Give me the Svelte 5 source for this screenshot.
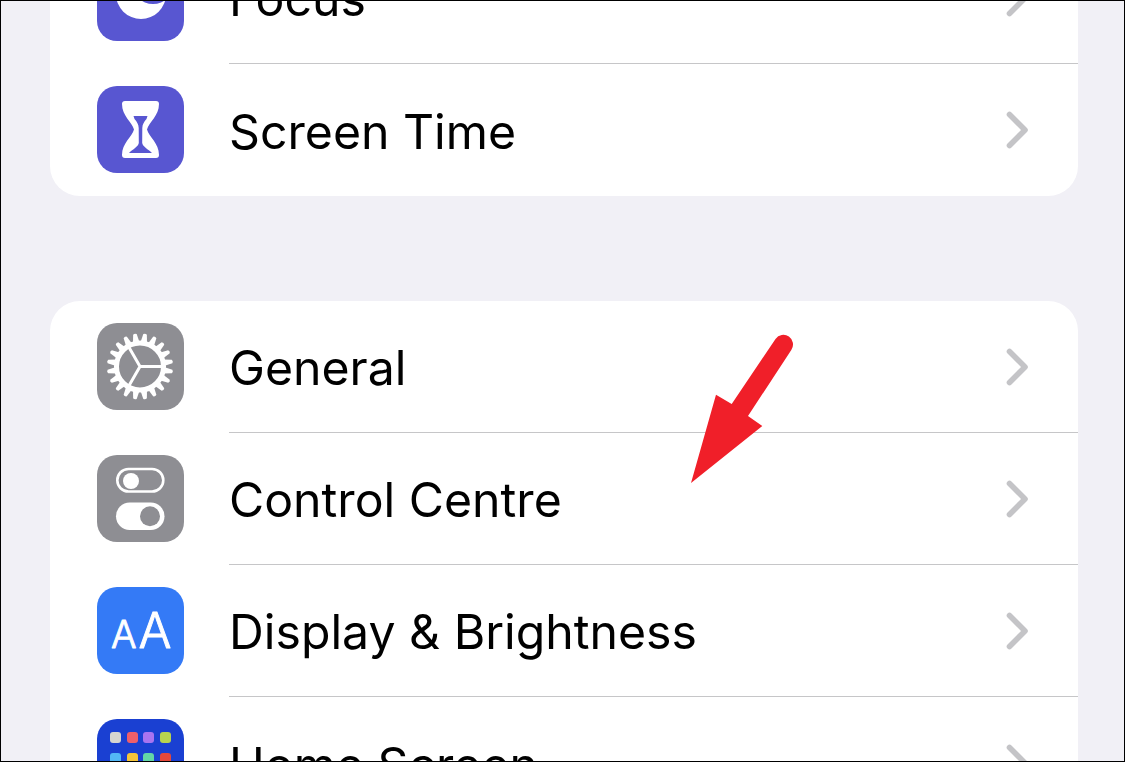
<script>
	const teeth = Array.from({ length: 20 }, (_, i) => i * 18);
	const homeDots = [
		{ x: 13, y: 13, c: '#d6d6d0' },
		{ x: 30, y: 13, c: '#ee5f6a' },
		{ x: 46, y: 13, c: '#a974f0' },
		{ x: 63, y: 13, c: '#b8d44f' },
		{ x: 13, y: 34, c: '#52b7f5' },
		{ x: 30, y: 34, c: '#f5c53a' },
		{ x: 46, y: 34, c: '#63d6a6' },
		{ x: 63, y: 34, c: '#e5483a' }
	];
</script>

{#snippet chevron()}
	<svg class="chevron" width="26" height="40" viewBox="0 0 26 40" fill="none" stroke="#c4c4c7" stroke-width="5.6" stroke-linecap="round" stroke-linejoin="round"><path d="M4.5 4.5 L20 20 L4.5 35.5" /></svg>
{/snippet}

<div class="frame">
	<div class="list">
		<section class="card">
			<div class="row">
				<svg class="icon" viewBox="0 0 87 87">
					<rect width="87" height="87" rx="20" fill="#5856d1" />
					<circle cx="44" cy="40" r="25" fill="#fff" />
					<circle cx="56" cy="29" r="21" fill="#5856d1" />
				</svg>
				<div class="body"><span class="label">Focus</span>{@render chevron()}</div>
			</div>
			<div class="row">
				<svg class="icon" viewBox="0 0 87 87">
					<rect width="87" height="87" rx="20" fill="#5856d1" />
					<path fill="#fff" d="M28 15 H59 a3 3 0 0 1 3 3 C62 30 52 36 50 43.5 C52 51 62 57 62 69 a3 3 0 0 1 -3 3 H28 a3 3 0 0 1 -3 -3 C25 57 35 51 37 43.5 C35 36 25 30 25 18 a3 3 0 0 1 3 -3 z" />
					<path fill="#5856d1" d="M36.5 30 H50.5 L49.5 33 C47 36 45.5 38 45.3 42 L45.2 57 C46 61 51 63 55 67 H32 C36 63 41 61 41.8 57 L41.7 42 C41.5 38 40 36 37.5 33 z" />
				</svg>
				<div class="body"><span class="label">Screen Time</span>{@render chevron()}</div>
			</div>
		</section>

		<section class="card">
			<div class="row">
				<svg class="icon" viewBox="0 0 87 87">
					<rect width="87" height="87" rx="20" fill="#8e8e93" />
					<g fill="#fff">
						{#each teeth as angle}
							<path d="M39.8 19 L41.2 11 Q43 9.5 44.8 11 L46.2 19 z" transform="rotate({angle + 9} 43 43.5)" />
						{/each}
					</g>
					<g fill="none" stroke="#fff">
						<circle cx="43" cy="43.5" r="23.5" stroke-width="5" />
						<path stroke-width="3" stroke-linecap="round" d="M43 43.5 H66 M43 43.5 L31.5 23.5 M43 43.5 L31.5 63.5" />
					</g>
				</svg>
				<div class="body"><span class="label">General</span>{@render chevron()}</div>
			</div>
			<div class="row">
				<svg class="icon" viewBox="0 0 87 87">
					<rect width="87" height="87" rx="20" fill="#8e8e93" />
					<rect x="20.3" y="14" width="46" height="22.5" rx="11.2" fill="none" stroke="#fff" stroke-width="2.6" />
					<circle cx="34" cy="26" r="8" fill="#fff" />
					<rect x="19" y="47.5" width="48.5" height="27.5" rx="13.7" fill="#fff" />
					<circle cx="53" cy="61.2" r="10" fill="#8e8e93" />
				</svg>
				<div class="body"><span class="label">Control Centre</span>{@render chevron()}</div>
			</div>
			<div class="row">
				<svg class="icon" viewBox="0 0 87 87">
					<rect width="87" height="87" rx="20" fill="#347af6" />
					<text class="aa" x="14" y="60.5" font-size="38">A</text>
					<text class="aa" x="41.5" y="60.5" font-size="49">A</text>
				</svg>
				<div class="body"><span class="label">Display &amp; Brightness</span>{@render chevron()}</div>
			</div>
			<div class="row">
				<svg class="icon" viewBox="0 0 87 87">
					<rect width="87" height="87" rx="20" fill="#1a40d2" />
					{#each homeDots as d}
						<rect x={d.x} y={d.y} width="11" height="11" rx="3" fill={d.c} />
					{/each}
				</svg>
				<div class="body"><span class="label">Home Screen</span>{@render chevron()}</div>
			</div>
		</section>
	</div>

	<svg class="arrow" width="1125" height="762" viewBox="0 0 1125 762">
		<path fill="#f01f29" d="M691 483 L716 394.7 L731.7 404 L775.5 339 A9.6 9.6 0 0 1 791.3 350 L748 416 L762.3 426 z" />
	</svg>
</div>

<style>
	:global(body) {
		background: #f1f0f6;
	}
	.frame {
		position: relative;
		box-sizing: border-box;
		width: 1125px;
		height: 762px;
		border: 1px solid #000;
		background: #f1f0f6;
		overflow: hidden;
		font-family: Inter, "Liberation Sans", sans-serif;
		color: #000;
	}
	.list {
		display: flex;
		flex-direction: column;
		gap: 105px;
		margin: -69px 46px 0 49px;
	}
	.card {
		background: #fff;
		border-radius: 30px;
		overflow: hidden;
	}
	.row {
		display: flex;
		align-items: center;
		height: 132px;
		padding-left: 47px;
	}
	.icon {
		flex: none;
		width: 87px;
		height: 87px;
		margin-bottom: 2px;
	}
	.body {
		flex: 1;
		display: flex;
		align-items: center;
		justify-content: space-between;
		height: 100%;
		margin-left: 45px;
		padding-right: 47px;
		box-sizing: border-box;
		border-bottom: 1px solid #c6c6c8;
	}
	.row:last-child .body {
		border-bottom: none;
	}
	.label {
		font-size: 48.2px;
		margin-top: 2px;
	}
	.aa {
		fill: #fff;
		stroke: #fff;
		stroke-width: 0.9;
		stroke-linejoin: round;
		font-family: Inter, sans-serif;
		font-weight: 300;
	}
	.arrow {
		position: absolute;
		left: -1px;
		top: -1px;
		pointer-events: none;
	}
</style>
